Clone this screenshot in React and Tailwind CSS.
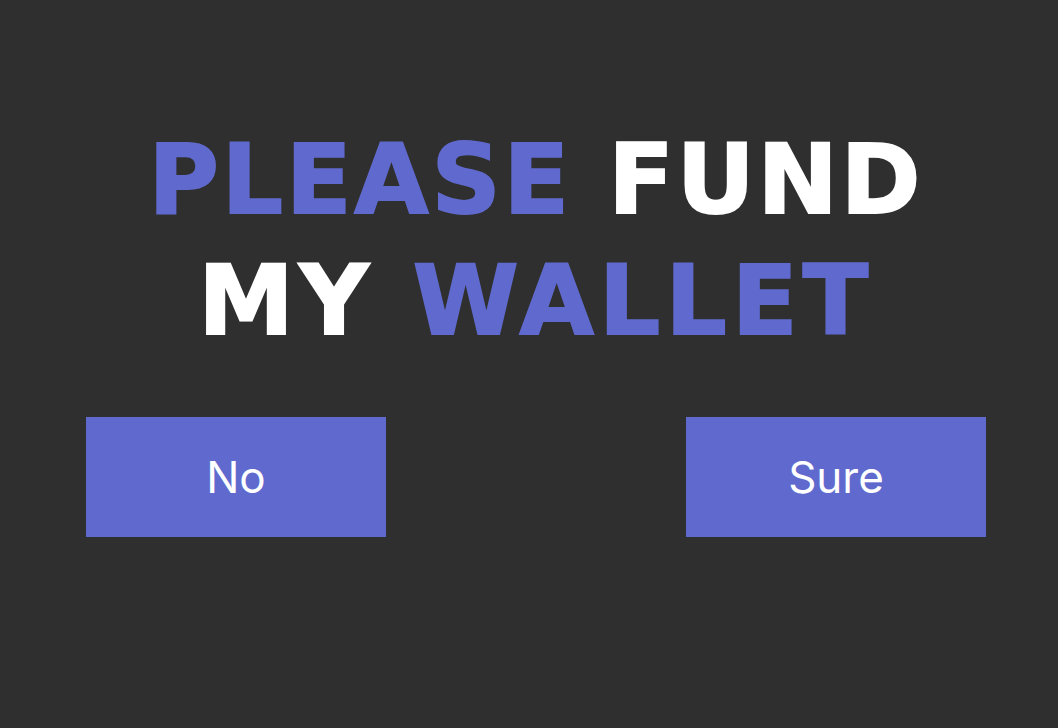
import React from 'react';

const App = () => {
  return (
    <div className="w-[1058px] h-[728px] bg-[#2f2f2f] overflow-hidden">
      <div className="w-[1072px] flex flex-col items-center">
        <h1
          className="mt-[120px] text-center text-[96px] leading-[121px] font-bold [-webkit-text-stroke:2px_currentColor]"
          style={{ fontFamily: '"DejaVu Sans", "Open Sans", sans-serif' }}
        >
          <span className="block tracking-[0.03em]">
            <span className="text-[#606ace]">PLEASE</span>{' '}
            <span className="text-white">FUND</span>
          </span>
          <span className="block tracking-[0.055em]">
            <span className="text-white">MY</span>{' '}
            <span className="text-[#606ace]">WALLET</span>
          </span>
        </h1>
        <div
          className="mt-[55px] flex gap-[300px]"
          style={{ fontFamily: 'Inter, "Liberation Sans", sans-serif' }}
        >
          <button className="w-[300px] h-[120px] bg-[#606ace] text-white text-[44px]">No</button>
          <button className="w-[300px] h-[120px] bg-[#606ace] text-white text-[44px]">Sure</button>
        </div>
      </div>
    </div>
  );
};

export default App;
